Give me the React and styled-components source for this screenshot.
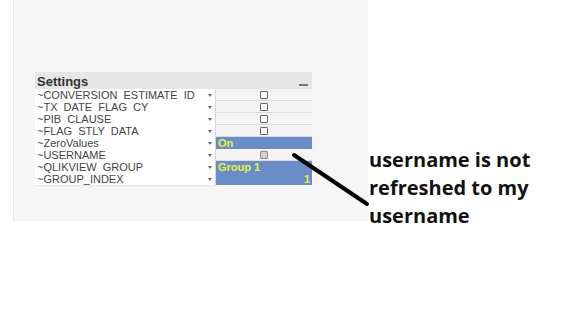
import React from 'react'
import styled, { createGlobalStyle } from 'styled-components'

const GlobalStyle = createGlobalStyle`
  html, body {
    margin: 0;
    background: #ffffff;
  }
`

const Page = styled.div`
  position: relative;
  width: 579px;
  height: 315px;
  display: flex;
  align-items: flex-start;
  font-family: "Liberation Sans", Arial, sans-serif;
`

const Canvas = styled.div`
  margin-left: 13px;
  width: 355px;
  height: 221px;
  background: #f6f6f6;
  border-left: 1px solid #e4e4e4;
  box-sizing: border-box;
  padding: 72px 0 0 21px;
`

const Box = styled.div`
  width: 277px;
  background: #ffffff;
  box-shadow: 0 1px 1px rgba(0, 0, 0, 0.06);
`

const Header = styled.div`
  height: 17px;
  background: #e6e6e6;
  display: flex;
  align-items: flex-end;
  justify-content: space-between;
  padding: 0 4px 0 2px;
`

const Title = styled.span`
  font-weight: bold;
  font-size: 13px;
  color: #333;
  line-height: 15px;
`

const Minimize = styled.span`
  width: 9px;
  height: 2px;
  margin-bottom: 3px;
  background: #777;
`

const Row = styled.div`
  display: grid;
  grid-template-columns: 180px 97px;
  height: 12px;
`

const Label = styled.div`
  position: relative;
  font-size: 11px;
  line-height: 12px;
  color: #444;
  padding-left: 2px;
  white-space: pre;
  overflow: hidden;
`

const Caret = styled.span`
  position: absolute;
  right: 3px;
  top: 5px;
  width: 0;
  height: 0;
  border-left: 2.5px solid transparent;
  border-right: 2.5px solid transparent;
  border-top: 3px solid #666;
`

const Value = styled.div`
  box-sizing: border-box;
  display: flex;
  align-items: center;
  justify-content: ${p => (p.$align === 'right' ? 'flex-end' : p.$align === 'left' ? 'flex-start' : 'center')};
  padding: 0 2px;
  font-size: 11px;
  font-weight: bold;
  color: #e4f33c;
  background: ${p => (p.$blue ? '#6b8dc7' : '#f4f4f4')};
  border-bottom: 1px solid ${p => (p.$blue ? '#ffffff' : '#dcdcdc')};
  border-left: 1px solid #d8d8d8;
`

const Check = styled.span`
  width: 6px;
  height: 6px;
  border: 1px solid ${p => (p.$dim ? '#888' : '#666')};
  background: ${p => (p.$dim ? '#cfcfcf' : '#fff')};
  border-radius: 1px;
`

const Note = styled.div`
  margin-top: 146px;
  margin-left: 1px;
  font-family: "Open Sans", Lato, sans-serif;
  font-weight: bold;
  font-size: 20px;
  line-height: 28px;
  color: #111;
`

const Arrow = styled.svg`
  position: absolute;
  left: 0;
  top: 0;
  pointer-events: none;
`

const rows = [
  { label: '~CONVERSION  ESTIMATE  ID', kind: 'check' },
  { label: '~TX  DATE  FLAG  CY', kind: 'check' },
  { label: '~PIB  CLAUSE', kind: 'check' },
  { label: '~FLAG  STLY  DATA', kind: 'check' },
  { label: '~ZeroValues', kind: 'text', text: 'On', align: 'left' },
  { label: '~USERNAME', kind: 'check', dim: true },
  { label: '~QLIKVIEW  GROUP', kind: 'text', text: 'Group  1', align: 'left' },
  { label: '~GROUP_INDEX', kind: 'text', text: '1', align: 'right' },
]

export default function App() {
  return (
    <Page>
      <GlobalStyle />
      <Canvas>
        <Box>
          <Header>
            <Title>Settings</Title>
            <Minimize />
          </Header>
          {rows.map(r => (
            <Row key={r.label}>
              <Label>
                {r.label}
                <Caret />
              </Label>
              {r.kind === 'check' ? (
                <Value>
                  <Check $dim={r.dim} />
                </Value>
              ) : (
                <Value $blue $align={r.align}>{r.text}</Value>
              )}
            </Row>
          ))}
        </Box>
      </Canvas>
      <Note>
        username is not
        <br />
        refreshed to my
        <br />
        username
      </Note>
      <Arrow width="579" height="315">
        <line x1="294" y1="155" x2="367" y2="204" stroke="#000" strokeWidth="4" strokeLinecap="round" />
      </Arrow>
    </Page>
  )
}
